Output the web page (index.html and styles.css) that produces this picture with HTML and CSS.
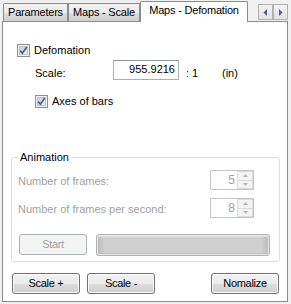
FILE: index.html
```html
<!DOCTYPE html>
<html>
<head>
<meta charset="utf-8">
<link rel="stylesheet" href="styles.css">
</head>
<body>
<div class="window">
  <div class="tabstrip">
    <div class="tab tab-params">Parameters</div>
    <div class="tab tab-scale">Maps - Scale</div>
    <div class="tab tab-active">Maps - Defomation</div>
    <div class="scroller">
      <div class="scroll-btn"><svg width="5" height="7" viewBox="0 0 5 7"><path d="M4 0 L4 7 L0.5 3.5 Z" fill="#4d5f82"/></svg></div>
      <div class="scroll-btn"><svg width="5" height="7" viewBox="0 0 5 7"><path d="M1 0 L1 7 L4.5 3.5 Z" fill="#4d5f82"/></svg></div>
    </div>
  </div>
  <div class="panel">
    <div class="check-row main-check">
      <span class="checkbox"><svg width="13" height="13" viewBox="0 0 13 13"><defs><linearGradient id="cg" x1="0" y1="0" x2="1" y2="1"><stop offset="0" stop-color="#c9cbcf"/><stop offset="1" stop-color="#f4f4f5"/></linearGradient></defs><rect x="0.5" y="0.5" width="12" height="12" fill="#f4f4f4" stroke="#8e8f8f"/><rect x="2.5" y="2.5" width="8" height="8" fill="url(#cg)" stroke="#c0c2c6"/><path d="M3.2 6.6 L5.4 9.2 L9.8 3" fill="none" stroke="#4a5f97" stroke-width="1.7"/></svg></span>
      <span class="label">Defomation</span>
    </div>
    <div class="scale-row">
      <span class="scale-label">Scale:</span>
      <div class="textbox">955.9216</div>
      <span class="ratio">: 1</span>
      <span class="unit">(in)</span>
    </div>
    <div class="check-row axes-check">
      <span class="checkbox"><svg width="13" height="13" viewBox="0 0 13 13"><defs><linearGradient id="cg2" x1="0" y1="0" x2="1" y2="1"><stop offset="0" stop-color="#c9cbcf"/><stop offset="1" stop-color="#f4f4f5"/></linearGradient></defs><rect x="0.5" y="0.5" width="12" height="12" fill="#f4f4f4" stroke="#8e8f8f"/><rect x="2.5" y="2.5" width="8" height="8" fill="url(#cg2)" stroke="#c0c2c6"/><path d="M3.2 6.6 L5.4 9.2 L9.8 3" fill="none" stroke="#4a5f97" stroke-width="1.7"/></svg></span>
      <span class="label">Axes of bars</span>
    </div>
    <fieldset class="group">
      <legend>Animation</legend>
      <div class="spin-row first">
        <span class="spin-label">Number of frames:</span>
        <div class="spinbox">
          <span class="spin-value">5</span>
          <div class="spin-btns">
            <div class="spin-btn"><svg width="5" height="3" viewBox="0 0 5 3"><path d="M0 3 L2.5 0 L5 3 Z" fill="#b8b8b8"/></svg></div>
            <div class="spin-btn"><svg width="5" height="3" viewBox="0 0 5 3"><path d="M0 0 L2.5 3 L5 0 Z" fill="#b8b8b8"/></svg></div>
          </div>
        </div>
      </div>
      <div class="spin-row second">
        <span class="spin-label">Number of frames per second:</span>
        <div class="spinbox">
          <span class="spin-value">8</span>
          <div class="spin-btns">
            <div class="spin-btn"><svg width="5" height="3" viewBox="0 0 5 3"><path d="M0 3 L2.5 0 L5 3 Z" fill="#b8b8b8"/></svg></div>
            <div class="spin-btn"><svg width="5" height="3" viewBox="0 0 5 3"><path d="M0 0 L2.5 3 L5 0 Z" fill="#b8b8b8"/></svg></div>
          </div>
        </div>
      </div>
      <div class="play-row">
        <div class="btn btn-disabled">Start</div>
        <div class="progress"><div class="progress-fill"></div></div>
      </div>
    </fieldset>
    <div class="button-row">
      <div class="btn">Scale +</div>
      <div class="btn">Scale -</div>
      <div class="btn btn-right">Nomalize</div>
    </div>
  </div>
</div>
</body>
</html>
```

FILE: styles.css
```css
* { box-sizing: border-box; }
html, body { margin: 0; padding: 0; }
body {
  background: #f0f0f0;
  font-family: "Liberation Sans", Arial, sans-serif;
  font-size: 11px;
  color: #000;
  width: 291px;
  height: 304px;
  overflow: hidden;
}
.window { width: 291px; }

.tabstrip {
  height: 21px;
  display: flex;
  align-items: flex-end;
  padding-left: 3px;
  padding-right: 3px;
}
.tab {
  height: 18px;
  border: 1px solid #898c95;
  border-bottom: none;
  background: linear-gradient(#f2f2f2 0%, #ebebeb 50%, #dddddd 51%, #cfcfcf 100%);
  line-height: 16px;
  text-align: center;
  white-space: nowrap;
  letter-spacing: -0.2px;
}
.tab-params { width: 65px; border-radius: 2px 0 0 0; }
.tab-scale { width: 72px; }
.tab-active {
  width: 108px;
  height: 21px;
  margin-bottom: -1px;
  background: #ffffff;
  line-height: 16px;
  z-index: 1;
  border-radius: 2px 2px 0 0;
}
.scroller {
  margin-left: auto;
  align-self: flex-start;
  margin-top: 4px;
  display: flex;
}
.scroll-btn {
  width: 15px;
  height: 16px;
  border: 1px solid #b1b1b1;
  background: linear-gradient(#f3f3f3, #e2e2e2);
  display: flex;
  align-items: center;
  justify-content: center;
}

.panel {
  margin-left: 2px;
  width: 286px;
  height: 281px;
  border: 1px solid #898c95;
  background: #ffffff;
  display: flex;
  flex-direction: column;
  align-items: flex-start;
}

.check-row {
  display: flex;
  align-items: center;
  height: 13px;
}
.checkbox { width: 13px; height: 13px; display: block; }
.checkbox svg { display: block; }
.check-row .label { margin-left: 4px; line-height: 13px; }
.main-check { margin: 22px 0 0 14px; }
.axes-check { margin: 15px 0 0 32px; }

.scale-row {
  display: flex;
  align-items: flex-start;
  height: 20px;
  margin: 3px 0 0 32px;
}
.scale-label { width: 78px; margin-top: 7px; line-height: 13px; }
.textbox {
  width: 66px;
  height: 20px;
  border: 1px solid #abadb3;
  border-top-color: #8f939c;
  background: #fff;
  text-align: right;
  padding: 2px 3px 0 0;
  line-height: 13px;
}
.ratio { width: 36px; margin-left: 7px; margin-top: 7px; line-height: 13px; }
.unit { margin-top: 7px; line-height: 13px; }

.group {
  margin: 43px 0 0 8px;
  width: 269px;
  border: 1px solid #d5dfe5;
  border-radius: 3px;
  padding: 0 0 5px 0;
  min-width: 0;
}
.group legend {
  margin-left: 6px;
  padding: 0 2px;
  line-height: 13px;
}
.spin-row {
  display: flex;
  align-items: flex-start;
  height: 20px;
  padding-left: 6px;
  padding-right: 25px;
}
.spin-row.first { margin-top: 6px; }
.spin-row.second { margin-top: 8px; }
.spin-label { color: #a0a0a0; margin-top: 5px; line-height: 13px; }
.spinbox {
  margin-left: auto;
  width: 44px;
  height: 20px;
  border: 1px solid #c5c5c5;
  background: #fff;
  display: flex;
}
.spin-value {
  flex: 1;
  text-align: right;
  color: #a0a0a0;
  line-height: 13px;
  padding: 3px 2px 0 0;
  font-size: 12px;
}
.spin-btns {
  width: 16px;
  display: flex;
  flex-direction: column;
}
.spin-btn {
  flex: 1;
  border: 1px solid #dadada;
  background: #f4f4f4;
  display: flex;
  align-items: center;
  justify-content: center;
}
.spin-btn + .spin-btn { border-top: none; }

.play-row {
  display: flex;
  margin-top: 16px;
  padding-left: 7px;
  padding-right: 9px;
  gap: 9px;
}
.progress {
  flex: 1;
  height: 22px;
  border: 1px solid #b2b2b2;
  border-radius: 3px;
  background: #e6e6e6;
  padding: 1px;
}
.progress-fill {
  height: 100%;
  border-radius: 1px;
  background: linear-gradient(90deg, #bdbdbd 0%, #cfcfcf 4%, #cfcfcf 96%, #bdbdbd 100%);
  box-shadow: inset 0 1px 0 #e0e0e0, inset 0 -1px 0 #bfbfbf;
}

.btn {
  width: 68px;
  height: 21px;
  border: 1px solid #707070;
  border-radius: 3px;
  background: linear-gradient(#f2f2f2 0%, #ebebeb 50%, #dddddd 51%, #cfcfcf 100%);
  box-shadow: inset 0 0 0 1px #fcfcfc;
  text-align: center;
  line-height: 19px;
  letter-spacing: -0.3px;
}
.btn-disabled {
  border-color: #adb2b5;
  background: #f4f4f4;
  color: #a0a0a0;
  box-shadow: none;
}

.button-row {
  display: flex;
  width: 100%;
  margin-top: 11px;
  padding-left: 9px;
  padding-right: 8px;
  gap: 7px;
}
.btn-right { margin-left: auto; }
```
